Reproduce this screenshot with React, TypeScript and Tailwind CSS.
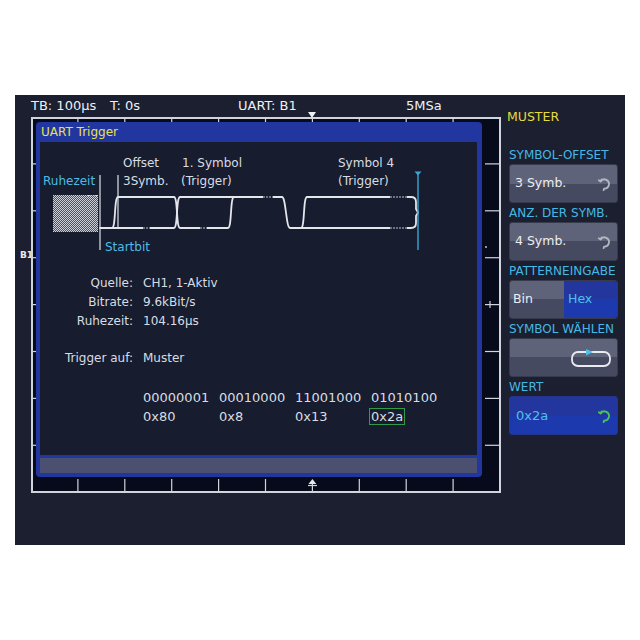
import React from "react";

const FONT = "font-['DejaVu_Sans','Liberation_Sans',sans-serif]";

const TICK_X = [1, 2, 3, 4, 5, 6, 7, 8, 9].map((k) => 46.9 * k - 2);
const TICK_Y = [1, 2, 3, 4, 5, 6, 7].map((k) => 46.9 * k - 2);

function Graticule() {
  return (
    <svg className="absolute inset-0" width="466" height="372" viewBox="0 0 466 372" fill="none" stroke="#d0d4dc" strokeWidth="1.2">
      {TICK_X.map((x, i) => (
        <g key={x}>
          <line x1={x} y1={0} x2={x} y2={4} />
          {i !== 5 && <line x1={x} y1={360} x2={x} y2={372} />}
        </g>
      ))}
      {TICK_Y.map((y) => (
        <g key={y}>
          <line x1={0} y1={y} x2={4} y2={y} />
          <line x1={452} y1={y} x2={466} y2={y} />
        </g>
      ))}
      <line x1={457} y1={182} x2={457} y2={189} />
      <circle cx={453} cy={128} r={0.9} fill="#d0d4dc" stroke="none" />
      <path d="M275.5 365 L279.4 360 L283.3 365 Z" fill="#e6e8ee" stroke="none" />
      <line x1={275} y1={366.5} x2={284} y2={366.5} />
      <line x1={279.4} y1={365} x2={279.4} y2={372} />
    </svg>
  );
}

function Waveform() {
  const text = "fill-[#d8dce4] text-[12px]";
  return (
    <svg width="437" height="114" viewBox="0 0 437 114" fill="none" className={FONT}>
      <defs>
        <pattern id="hatch" width="2" height="2" patternUnits="userSpaceOnUse">
          <rect width="2" height="2" fill="#4a4f61" />
          <rect width="1" height="1" fill="#cfd2da" />
          <rect x="1" y="1" width="1" height="1" fill="#cfd2da" />
        </pattern>
      </defs>

      <text x="3" y="42.5" className="fill-[#4cbbe6] text-[12px]">Ruhezeit</text>
      <text x="83" y="24.5" className={text}>Offset</text>
      <text x="83" y="42.5" className={text}>3Symb.</text>
      <text x="142" y="24.5" className={text}>1. Symbol</text>
      <text x="141" y="42.5" className={text}>(Trigger)</text>
      <text x="298" y="24.5" className={text}>Symbol 4</text>
      <text x="298" y="42.5" className={text}>(Trigger)</text>
      <text x="65" y="109" className="fill-[#4cbbe6] text-[12px]">Startbit</text>

      <rect x="13" y="53" width="45" height="37" fill="url(#hatch)" />
      <line x1="48" y1="53.5" x2="58" y2="53.5" stroke="#d0d3da" strokeDasharray="1.5 1" />

      <g stroke="#e4e6ec" strokeWidth="1.8" strokeLinejoin="round" strokeLinecap="round">
        <path d="M60 86 L72 86 C76 86 74 55 78 55 L134 55 C138 55 136 86 140 86 L188 86 C192 86 190 55 194 55" />
        <path d="M72 86 L134 86 C138 86 136 55 140 55 L242 55 C246 55 246 86 250 86 L261 86 C265 86 263 55 267 55 L371 55 Q376 55 376 60 L376 67 L378 70.5 L376 74 L376 81 Q376 86 371 86 L267 86 C263 86 265 86 261 86" />
      </g>

      <g strokeWidth="2.6" stroke="#171c2e">
        <line x1="103" y1="86" x2="110" y2="86" />
        <line x1="160" y1="86" x2="167" y2="86" />
        <line x1="223" y1="55" x2="233" y2="55" />
        <line x1="350" y1="55" x2="367" y2="55" />
        <line x1="350" y1="86" x2="367" y2="86" />
      </g>
      <g strokeWidth="1.5" stroke="#8a8f9e" strokeDasharray="2 1">
        <line x1="103" y1="86" x2="110" y2="86" />
        <line x1="160" y1="86" x2="167" y2="86" />
        <line x1="223" y1="55" x2="233" y2="55" />
        <line x1="350" y1="55" x2="367" y2="55" />
        <line x1="350" y1="86" x2="367" y2="86" />
      </g>

      <line x1="60" y1="33" x2="60" y2="108" stroke="#e0e3ea" strokeWidth="1.2" />
      <line x1="78" y1="33" x2="78" y2="85" stroke="#e0e3ea" strokeWidth="1.2" />
      <line x1="378" y1="31" x2="378" y2="108" stroke="#3aa6d6" strokeWidth="1.4" />
      <path d="M374.5 29.5 L381.5 29.5 L378 33.5 Z" fill="#3aa6d6" />
    </svg>
  );
}

function KnobIcon({ color }: { color: string }) {
  return (
    <svg width="14" height="14" viewBox="0 0 14 14" fill="none" stroke={color} strokeWidth="1.8" strokeLinecap="round" strokeLinejoin="round">
      <path d="M3.6 4.4 A4.6 4.6 0 1 1 7 11.6 L6.6 13.2" />
      <path d="M1.8 3.2 L3.6 4.4 L4.6 2.4" />
    </svg>
  );
}

function Header({ children }: { children: React.ReactNode }) {
  return <div className="flex h-[19px] items-center whitespace-nowrap text-[12px] leading-none text-[#45b8e6]">{children}</div>;
}

const GRAY = "bg-[linear-gradient(to_bottom,#5e6379_50%,#454a60_50%)]";
const BLUE = "bg-[linear-gradient(to_bottom,#22369e_50%,#1c3aae_50%)]";

function SideButton({ label }: { label: string }) {
  return (
    <div className={`flex h-[39px] w-[109px] items-center justify-between rounded-[3px] border border-[#353a4d] pl-[5px] pr-[6px] ${GRAY}`}>
      <span className="text-[12.5px] text-[#eceef2]">{label}</span>
      <KnobIcon color="#b3b7c2" />
    </div>
  );
}

export default function App() {
  const params: [string, string][] = [
    ["Quelle:", "CH1, 1-Aktiv"],
    ["Bitrate:", "9.6kBit/s"],
    ["Ruhezeit:", "104.16µs"],
  ];
  const bits = ["00000001", "00010000", "11001000", "01010100"];
  const hex = ["0x80", "0x8", "0x13", "0x2a"];

  return (
    <div className={`h-[640px] w-[640px] bg-white pl-[15px] pt-[95px] ${FONT}`}>
      <div className="flex h-[450px] w-[610px] bg-[#1b1f2f]">
        {/* scope area */}
        <div className="relative w-[486px] pl-[16px]">
          <div className="flex h-[22px] items-center text-[13px] text-[#eef0f4]">
            <span className="w-[79px]">TB: 100µs</span>
            <span className="w-[128px]">T: 0s</span>
            <span className="w-[168px]">UART: B1</span>
            <span>5MSa</span>
          </div>
          <span className="absolute left-[5px] top-[155px] text-[9px] font-bold leading-[10px] text-[#e8eaf0]">B1</span>

          <div className="relative h-[376px] w-[470px] border-2 border-[#d0d4dc] bg-[#070a1a] p-[3px]">
            <Graticule />
            <svg className="absolute left-[274px] top-[-9px]" width="10" height="9" viewBox="0 0 10 9">
              <path d="M1 2 L9 2 L5 8 Z" fill="#eef0f4" />
            </svg>

            <div className="relative flex h-[355px] w-[446px] flex-col rounded-[4px] bg-[#2236a0] pb-[4px] pl-[4px] pr-[5px]">
              <div className="flex h-[20px] items-center pl-[1px] text-[12px] text-[#e9e24c]">UART Trigger</div>
              <div className="flex h-[313px] flex-col bg-[#171c2e] text-[12px] text-[#d8dce4]">
                <Waveform />

                <div className="mt-[18px] grid grid-cols-[93px_1fr] gap-x-[10px] leading-[19px]">
                  {params.map(([k, v]) => (
                    <React.Fragment key={k}>
                      <span className="text-right">{k}</span>
                      <span>{v}</span>
                    </React.Fragment>
                  ))}
                </div>

                <div className="mt-[18px] grid grid-cols-[93px_1fr] gap-x-[10px] leading-[19px]">
                  <span className="text-right">Trigger auf:</span>
                  <span>Muster</span>
                </div>

                <div className="mt-[20px] pl-[103px] text-[13px] leading-[19px]">
                  <div className="flex">
                    {bits.map((b) => (
                      <span key={b} className="w-[76px]">{b}</span>
                    ))}
                  </div>
                  <div className="flex">
                    {hex.map((h, i) => (
                      <span key={h} className="w-[76px]">
                        {i === 3 ? (
                          <span className="-ml-[2px] inline-block border border-[#2f9a48] px-[1px] leading-[15px]">{h}</span>
                        ) : (
                          h
                        )}
                      </span>
                    ))}
                  </div>
                </div>
              </div>
              <div className="mt-[3px] h-[15px] bg-[#4b5070]" />
            </div>
          </div>
        </div>

        {/* soft menu */}
        <div className="w-[124px] pl-[8px]">
          <div className="-ml-[2px] flex h-[44px] items-center text-[12.5px] text-[#e6dc3c]">MUSTER</div>
          <div className="h-[6px]" />
          <Header>SYMBOL-OFFSET</Header>
          <SideButton label="3 Symb." />
          <Header>ANZ. DER SYMB.</Header>
          <SideButton label="4 Symb." />
          <Header>PATTERNEINGABE</Header>
          <div className="flex h-[39px] w-[109px] overflow-hidden rounded-[3px] border border-[#353a4d] text-[12.5px]">
            <div className={`flex w-[54px] items-center pl-[3px] text-[#eceef2] ${GRAY}`}>Bin</div>
            <div className={`flex flex-1 items-center pl-[4px] text-[#4fc0ea] ${BLUE}`}>Hex</div>
          </div>
          <Header>SYMBOL WÄHLEN</Header>
          <div className={`flex h-[39px] w-[109px] items-center justify-end rounded-[3px] border border-[#353a4d] pr-[6px] ${GRAY}`}>
            <svg width="40" height="20" viewBox="0 0 40 20" fill="none">
              <rect x="1" y="4" width="38" height="14" rx="6" stroke="#e8eaf0" strokeWidth="1.8" />
              <path d="M15 1 L22 4 L15 7.5 Z" fill="#4cc0ec" />
            </svg>
          </div>
          <Header>WERT</Header>
          <div className={`flex h-[39px] w-[109px] items-center justify-between rounded-[3px] border border-[#23348a] pl-[6px] pr-[6px] ${BLUE}`}>
            <span className="text-[13px] text-[#4fc0ea]">0x2a</span>
            <KnobIcon color="#4cc35a" />
          </div>
        </div>
      </div>
    </div>
  );
}
